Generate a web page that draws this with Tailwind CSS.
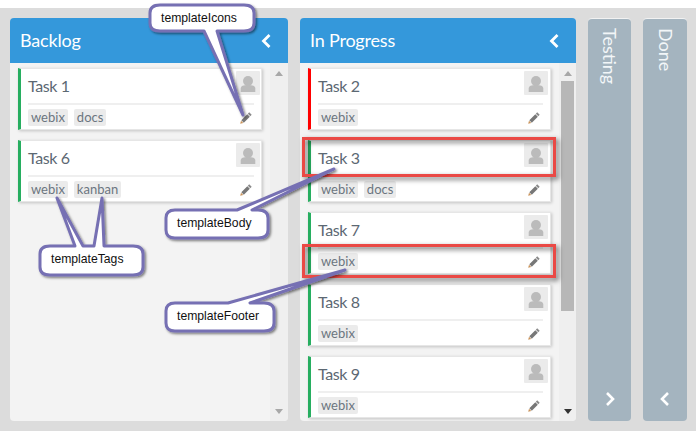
<!DOCTYPE html>
<html><head><script src="https://cdn.jsdelivr.net/npm/@tailwindcss/browser@4"></script></head>
<body class="relative w-[696px] h-[431px] overflow-hidden bg-white font-['Lato','Noto_Sans',sans-serif]">
<div class="mt-2 h-[423px] bg-[#dcdcdc] flex pt-2.5 pb-2.5 pl-2.5 pr-[9px] gap-3">
  <!-- Backlog -->
  <section class="w-[278px] flex flex-col rounded-[4px] overflow-hidden">
    <header class="h-[45px] shrink-0 bg-[#3498db] flex items-center justify-between pl-2.5 pr-[17px] text-white text-[18px] tracking-[-0.2px]"><span>Backlog</span>
      <svg width="10" height="14" viewBox="0 0 10 14" fill="none" stroke="white" stroke-width="2.800"><path d="M8.500 1 2.500 7 8.500 13"/></svg></header>
    <div class="flex-1 bg-[#f3f3f3] flex min-h-0">
      <div class="w-[260px] pl-2 pt-[5px] flex flex-col gap-2.5">
        <article class="relative h-[62px] w-[244px] shrink-0 bg-white border border-[#e6e6e6] border-l-[3px] border-l-[#27ae60] shadow-[1px_1px_3px_rgba(0,0,0,0.2)] pl-[7px] pr-[7px]">
          <div class="h-[36px] border-b-2 border-[#efefef] flex items-center text-[16px] tracking-[-0.4px] text-[#5c6873]">Task 1</div>
          <div class="flex gap-1.5 pt-[4px]"><span class="h-[17px] px-[3px] rounded-[2px] bg-[#ebebeb] text-[13px] leading-[17px] text-[#6b7680]">webix</span><span class="h-[17px] px-[3px] rounded-[2px] bg-[#ebebeb] text-[13px] leading-[17px] text-[#6b7680]">docs</span></div>
          <svg class="absolute left-[215px] top-[2px]" width="24" height="24" viewBox="0 0 24 24"><rect width="24" height="24" rx="1" fill="#ebebeb"/><circle cx="12" cy="10" r="5" fill="#bbb"/><path d="M4.700 21v-3.500c0-2.500 2.500-3.500 7.300-3.500s7.300 1 7.300 3.500v3.500z" fill="#bbb"/></svg>
          <svg class="absolute left-[219px] top-[43px]" width="12" height="12" viewBox="0 0 12 12"><path d="M9.200.3 11.700 2.800 10.300 4.200 7.800 1.700z" fill="#8a8a8a"/><path d="M7.300 2.200 9.800 4.700 3.800 10.700 1.300 8.200z" fill="#777"/><path d="M1 8.700 3.300 11 .2 11.800z" fill="#c9935a"/></svg>
        </article>
        <article class="relative h-[62px] w-[244px] shrink-0 bg-white border border-[#e6e6e6] border-l-[3px] border-l-[#27ae60] shadow-[1px_1px_3px_rgba(0,0,0,0.2)] pl-[7px] pr-[7px]">
          <div class="h-[36px] border-b-2 border-[#efefef] flex items-center text-[16px] tracking-[-0.4px] text-[#5c6873]">Task 6</div>
          <div class="flex gap-1.5 pt-[4px]"><span class="h-[17px] px-[3px] rounded-[2px] bg-[#ebebeb] text-[13px] leading-[17px] text-[#6b7680]">webix</span><span class="h-[17px] px-[3px] rounded-[2px] bg-[#ebebeb] text-[13px] leading-[17px] text-[#6b7680]">kanban</span></div>
          <svg class="absolute left-[215px] top-[2px]" width="24" height="24" viewBox="0 0 24 24"><rect width="24" height="24" rx="1" fill="#ebebeb"/><circle cx="12" cy="10" r="5" fill="#bbb"/><path d="M4.700 21v-3.500c0-2.500 2.500-3.500 7.300-3.500s7.300 1 7.300 3.500v3.500z" fill="#bbb"/></svg>
          <svg class="absolute left-[219px] top-[43px]" width="12" height="12" viewBox="0 0 12 12"><path d="M9.200.3 11.700 2.800 10.300 4.200 7.800 1.700z" fill="#8a8a8a"/><path d="M7.300 2.200 9.800 4.700 3.800 10.700 1.300 8.200z" fill="#777"/><path d="M1 8.700 3.300 11 .2 11.800z" fill="#c9935a"/></svg>
        </article>
      </div>
      <div class="flex-1 bg-[#efefef] flex flex-col items-center justify-between pt-2 pb-[7px]">
        <svg width="8" height="5" viewBox="0 0 8 5"><path d="M0 5 4 0 8 5z" fill="#a8a8a8"/></svg>
        <svg width="8" height="5" viewBox="0 0 8 5"><path d="M0 0 4 5 8 0z" fill="#a8a8a8"/></svg>
      </div>
    </div>
  </section>
  <!-- In Progress -->
  <section class="w-[276px] flex flex-col rounded-[4px] overflow-hidden">
    <header class="h-[45px] shrink-0 bg-[#3498db] flex items-center justify-between pl-2.5 pr-[17px] text-white text-[18px] tracking-[-0.2px]"><span>In Progress</span>
      <svg width="10" height="14" viewBox="0 0 10 14" fill="none" stroke="white" stroke-width="2.800"><path d="M8.500 1 2.500 7 8.500 13"/></svg></header>
    <div class="flex-1 bg-[#f3f3f3] flex min-h-0">
      <div class="w-[259px] pl-2 pt-[5px] flex flex-col gap-2.5 overflow-hidden">
        <article class="relative h-[62px] w-[243px] shrink-0 bg-white border border-[#e6e6e6] border-l-[3px] border-l-[#ff0000] shadow-[1px_1px_3px_rgba(0,0,0,0.2)] pl-[7px] pr-[7px]">
          <div class="h-[36px] border-b-2 border-[#efefef] flex items-center text-[16px] tracking-[-0.4px] text-[#5c6873]">Task 2</div>
          <div class="flex gap-1.5 pt-[4px]"><span class="h-[17px] px-[3px] rounded-[2px] bg-[#ebebeb] text-[13px] leading-[17px] text-[#6b7680]">webix</span></div>
          <svg class="absolute left-[213px] top-[2px]" width="24" height="24" viewBox="0 0 24 24"><rect width="24" height="24" rx="1" fill="#ebebeb"/><circle cx="12" cy="10" r="5" fill="#bbb"/><path d="M4.700 21v-3.500c0-2.500 2.500-3.500 7.300-3.500s7.300 1 7.300 3.500v3.500z" fill="#bbb"/></svg>
          <svg class="absolute left-[217px] top-[43px]" width="12" height="12" viewBox="0 0 12 12"><path d="M9.200.3 11.700 2.800 10.300 4.200 7.800 1.700z" fill="#8a8a8a"/><path d="M7.300 2.200 9.800 4.700 3.800 10.700 1.300 8.200z" fill="#777"/><path d="M1 8.700 3.300 11 .2 11.800z" fill="#c9935a"/></svg>
        </article>
        <article class="relative h-[62px] w-[243px] shrink-0 bg-white border border-[#e6e6e6] border-l-[3px] border-l-[#27ae60] shadow-[1px_1px_3px_rgba(0,0,0,0.2)] pl-[7px] pr-[7px]">
          <div class="h-[36px] border-b-2 border-[#efefef] flex items-center text-[16px] tracking-[-0.4px] text-[#5c6873]">Task 3</div>
          <div class="flex gap-1.5 pt-[4px]"><span class="h-[17px] px-[3px] rounded-[2px] bg-[#ebebeb] text-[13px] leading-[17px] text-[#6b7680]">webix</span><span class="h-[17px] px-[3px] rounded-[2px] bg-[#ebebeb] text-[13px] leading-[17px] text-[#6b7680]">docs</span></div>
          <svg class="absolute left-[213px] top-[2px]" width="24" height="24" viewBox="0 0 24 24"><rect width="24" height="24" rx="1" fill="#ebebeb"/><circle cx="12" cy="10" r="5" fill="#bbb"/><path d="M4.700 21v-3.500c0-2.500 2.500-3.500 7.300-3.500s7.300 1 7.300 3.500v3.500z" fill="#bbb"/></svg>
          <svg class="absolute left-[217px] top-[43px]" width="12" height="12" viewBox="0 0 12 12"><path d="M9.200.3 11.700 2.800 10.300 4.200 7.800 1.700z" fill="#8a8a8a"/><path d="M7.300 2.200 9.800 4.700 3.800 10.700 1.300 8.200z" fill="#777"/><path d="M1 8.700 3.300 11 .2 11.800z" fill="#c9935a"/></svg>
        </article>
        <article class="relative h-[62px] w-[243px] shrink-0 bg-white border border-[#e6e6e6] border-l-[3px] border-l-[#27ae60] shadow-[1px_1px_3px_rgba(0,0,0,0.2)] pl-[7px] pr-[7px]">
          <div class="h-[36px] border-b-2 border-[#efefef] flex items-center text-[16px] tracking-[-0.4px] text-[#5c6873]">Task 7</div>
          <div class="flex gap-1.5 pt-[4px]"><span class="h-[17px] px-[3px] rounded-[2px] bg-[#ebebeb] text-[13px] leading-[17px] text-[#6b7680]">webix</span></div>
          <svg class="absolute left-[213px] top-[2px]" width="24" height="24" viewBox="0 0 24 24"><rect width="24" height="24" rx="1" fill="#ebebeb"/><circle cx="12" cy="10" r="5" fill="#bbb"/><path d="M4.700 21v-3.500c0-2.500 2.500-3.500 7.300-3.500s7.300 1 7.300 3.500v3.500z" fill="#bbb"/></svg>
          <svg class="absolute left-[217px] top-[43px]" width="12" height="12" viewBox="0 0 12 12"><path d="M9.200.3 11.700 2.800 10.300 4.200 7.800 1.700z" fill="#8a8a8a"/><path d="M7.300 2.200 9.800 4.700 3.800 10.700 1.300 8.200z" fill="#777"/><path d="M1 8.700 3.300 11 .2 11.800z" fill="#c9935a"/></svg>
        </article>
        <article class="relative h-[62px] w-[243px] shrink-0 bg-white border border-[#e6e6e6] border-l-[3px] border-l-[#27ae60] shadow-[1px_1px_3px_rgba(0,0,0,0.2)] pl-[7px] pr-[7px]">
          <div class="h-[36px] border-b-2 border-[#efefef] flex items-center text-[16px] tracking-[-0.4px] text-[#5c6873]">Task 8</div>
          <div class="flex gap-1.5 pt-[4px]"><span class="h-[17px] px-[3px] rounded-[2px] bg-[#ebebeb] text-[13px] leading-[17px] text-[#6b7680]">webix</span></div>
          <svg class="absolute left-[213px] top-[2px]" width="24" height="24" viewBox="0 0 24 24"><rect width="24" height="24" rx="1" fill="#ebebeb"/><circle cx="12" cy="10" r="5" fill="#bbb"/><path d="M4.700 21v-3.500c0-2.500 2.500-3.500 7.300-3.500s7.300 1 7.300 3.500v3.500z" fill="#bbb"/></svg>
          <svg class="absolute left-[217px] top-[43px]" width="12" height="12" viewBox="0 0 12 12"><path d="M9.200.3 11.700 2.800 10.300 4.200 7.800 1.700z" fill="#8a8a8a"/><path d="M7.300 2.200 9.800 4.700 3.800 10.700 1.300 8.200z" fill="#777"/><path d="M1 8.700 3.300 11 .2 11.800z" fill="#c9935a"/></svg>
        </article>
        <article class="relative h-[62px] w-[243px] shrink-0 bg-white border border-[#e6e6e6] border-l-[3px] border-l-[#27ae60] shadow-[1px_1px_3px_rgba(0,0,0,0.2)] pl-[7px] pr-[7px]">
          <div class="h-[36px] border-b-2 border-[#efefef] flex items-center text-[16px] tracking-[-0.4px] text-[#5c6873]">Task 9</div>
          <div class="flex gap-1.5 pt-[4px]"><span class="h-[17px] px-[3px] rounded-[2px] bg-[#ebebeb] text-[13px] leading-[17px] text-[#6b7680]">webix</span></div>
          <svg class="absolute left-[213px] top-[2px]" width="24" height="24" viewBox="0 0 24 24"><rect width="24" height="24" rx="1" fill="#ebebeb"/><circle cx="12" cy="10" r="5" fill="#bbb"/><path d="M4.700 21v-3.500c0-2.500 2.500-3.500 7.300-3.500s7.300 1 7.300 3.500v3.500z" fill="#bbb"/></svg>
          <svg class="absolute left-[217px] top-[43px]" width="12" height="12" viewBox="0 0 12 12"><path d="M9.200.3 11.700 2.800 10.300 4.200 7.800 1.700z" fill="#8a8a8a"/><path d="M7.300 2.200 9.800 4.700 3.800 10.700 1.300 8.200z" fill="#777"/><path d="M1 8.700 3.300 11 .2 11.800z" fill="#c9935a"/></svg>
        </article>
      </div>
      <div class="flex-1 bg-[#efefef] flex flex-col items-center pt-2 pb-[7px]">
        <svg class="shrink-0" width="8" height="5" viewBox="0 0 8 5"><path d="M0 5 4 0 8 5z" fill="#a8a8a8"/></svg>
        <div class="mt-[5px] w-[13px] h-[230px] bg-[#b7b7b7]"></div>
        <svg class="mt-auto shrink-0" width="8" height="5" viewBox="0 0 8 5"><path d="M0 0 4 5 8 0z" fill="#333"/></svg>
      </div>
    </div>
  </section>
  <!-- Testing -->
  <section class="w-[43px] rounded-[4px] bg-[#a4b4bf] border-t border-t-[#f2f2f2] flex flex-col items-center justify-between pt-[9px] pb-[15px] text-[#f2f6f8] text-[18px]">
    <span class="[writing-mode:vertical-rl]">Testing</span>
    <svg width="10" height="14" viewBox="0 0 10 14" fill="none" stroke="white" stroke-width="2.600"><path d="M2 1 8 7 2 13"/></svg>
  </section>
  <!-- Done -->
  <section class="w-[44px] rounded-[4px] bg-[#a4b4bf] border-t border-t-[#f2f2f2] flex flex-col items-center justify-between pt-[9px] pb-[15px] text-[#f2f6f8] text-[18px]">
    <span class="[writing-mode:vertical-rl]">Done</span>
    <svg width="10" height="14" viewBox="0 0 10 14" fill="none" stroke="white" stroke-width="2.600"><path d="M8 1 2 7 8 13"/></svg>
  </section>
</div>

<!-- annotation layer -->
<svg class="absolute left-0 top-0" width="696" height="431" viewBox="0 0 696 431">
  <defs>
    <filter id="sh" x="-20%" y="-20%" width="150%" height="150%"><feDropShadow dx="1.500" dy="1.500" stdDeviation="1.200" flood-color="#000" flood-opacity="0.5"/></filter>
    <filter id="rs" x="-5%" y="-30%" width="110%" height="170%"><feDropShadow dx="2.500" dy="2.500" stdDeviation="2.500" flood-color="#000" flood-opacity="0.6"/></filter>
  </defs>
  <g fill="none" stroke="#ea4a45" stroke-width="3">
    <rect x="303.500" y="138.500" width="251" height="37" filter="url(#rs)"/>
    <rect x="303.500" y="245.500" width="251" height="31" filter="url(#rs)"/>
  </g>
  <g fill="#fff" stroke="#7670b3" stroke-width="3" stroke-linejoin="round" filter="url(#sh)">
    <path d="M160 5H244Q254 5 254 13V23Q254 31 244 31H217L243 115 204 31H160Q150 31 150 23V13Q150 5 160 5Z"/>
    <path d="M50 246H75L57 198 83 246H94L102 198 104 246H133Q143 246 143 254V267Q143 275 133 275H50Q40 275 40 267V254Q40 246 50 246Z"/>
    <path d="M175 210H237L334 169 252 210H258Q268 210 268 218V230Q268 238 258 238H175Q166 238 166 230V218Q166 210 175 210Z"/>
    <path d="M175 303H228L345 270 250 303H264Q274 303 274 311V323Q274 331 264 331H175Q166 331 166 323V311Q166 303 175 303Z"/>
  </g>
  <g font-family="Liberation Sans" font-size="12.200" fill="#111">
    <text x="161" y="22">templateIcons</text>
    <text x="51" y="263">templateTags</text>
    <text x="177" y="227">templateBody</text>
    <text x="177" y="320">templateFooter</text>
  </g>
</svg>
</body></html>
